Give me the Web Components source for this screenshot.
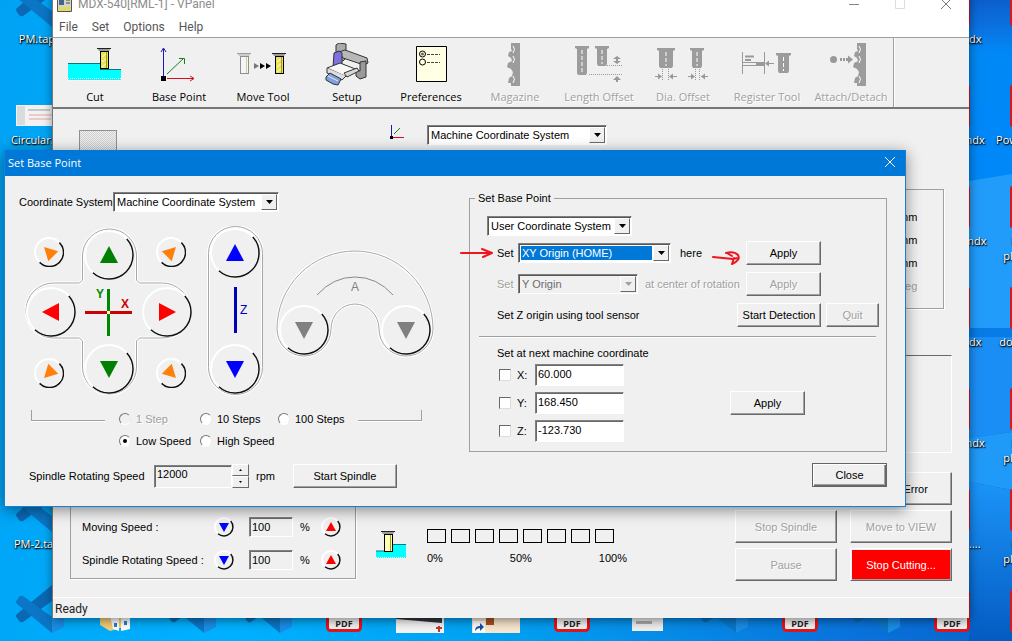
<!DOCTYPE html>
<html lang="en">
<head>
<meta charset="utf-8">
<title>VPanel</title>
<style>
html,body{margin:0;height:100%;overflow:hidden}
body{font:11px/14px "Liberation Sans",Arial,sans-serif;color:#000}
</style>
</head>
<body>
<vp-desktop>
  <app-window></app-window>
  <base-dialog></base-dialog>
</vp-desktop>
<script>
const UI = '"Open Sans","Noto Sans",sans-serif';
const BASE = '*{box-sizing:border-box}button,input,select{font:inherit;color:inherit;margin:0}:host([hidden]){display:none}';
function element(name, render) {
  customElements.define(name, class extends HTMLElement {
    connectedCallback() {
      if (this.shadowRoot) return;
      const root = this.attachShadow({ mode: 'open' });
      const t = document.createElement('template');
      t.innerHTML = render(k => this.getAttribute(k) ?? '', this);
      root.append(t.content.cloneNode(true));
    }
  });
}

/* ---------- drawings ---------- */
const cutter = (x, y, h = 20, body = '#e8e25a') => `<g transform="translate(${x} ${y})"><path d="M0 0h14l-2 3H2z" fill="#9a9a9a"/><path d="M0 .5h14" stroke="#222"/><rect x="3.5" y="3.5" width="8" height="${h - 4}" fill="${body}" stroke="#000"/><path d="M5 9l5-4M5 14l5-4M5 19l5-4" stroke="#fffde0"/><path d="M9.500 4v${h - 5}" stroke="#a39b18"/></g>`;
const greyTool = (x, y, h = 20, w = 14) => `<g transform="translate(${x} ${y})"><path d="M0 0h${w}v2l-2 1v${h - 5}l-1 2H3l-1-2V3L0 2z" fill="#9c9c9c"/><path d="M${w / 2} 4v${h - 6}" stroke="#fff" stroke-dasharray="4 2"/></g>`;
const magazine = x => `<g transform="translate(${x} 0)"><path d="M4 0h9v43H4v-3H1l1-5 3-2 1-4-2-3-4-2 1-4 4-2-1-3-3-2 1-4 3-1-1-2z" fill="#9c9c9c"/><path d="M6 3q3 3 0 7M6 13q3 3 0 7M6 33q3 3 0 7" fill="none" stroke="#fff"/></g>`;
const ICONS = {
  cut: `<path d="M1 20h32v6h21v11H1z" fill="#0ff"/><path d="M1 20.500h32M33 26.500h21" stroke="#087878"/><path d="M1 35.500h53M2 37.500h52" stroke="#fff" stroke-dasharray="1 1"/>${cutter(30, 5, 21)}`,
  base: `<path d="M12.500 33V6M10 9l2.500-4 2.500 4" fill="none" stroke="#2018b0"/><path d="M16 31l17-16M28 15.500h5.500V21" fill="none" stroke="#178017"/><path d="M16 35.500h27M39 33l4 2.500-4 2.500" fill="none" stroke="#d01020"/><path d="M10 33h5v5h-5z"/>`,
  move: `<g opacity=".4">${cutter(2, 10, 21, '#fff')}</g><path d="M19 20v6l5-3z" fill="#777"/><path d="M25 20v6l5-3zM31 20v6l5-3z"/>${cutter(37, 10, 21)}`,
  setup: `<g stroke="#333" stroke-linejoin="round"><path d="M17 2l3-2 7 1v14l-3 3-7-3z" fill="#aaa"/><path d="M20 9l6-2 22 8 1 5-4 2-21-7z" fill="#b8b8b8"/><path d="M41 19l6-1v16l-6 2-4-3v-6l4 1z" fill="#999"/><path d="M15 10l5-2 3 2v14l-5 4-4-3z" fill="#7c74dc"/><path d="M8 25l13-5 18 7-13 6z" fill="#f8f8f8"/><path d="M25 30l13-5 2 3-12 6z" fill="#d7d7d7"/><path d="M8 25v5l15 7 4-4" fill="#ddd"/><path d="M7 34l4-4 11 6-3 6-5-1-7-4z" fill="#7fa0dc"/><path d="M9 33l10 5" fill="none" stroke="#dfe9ff"/></g>`,
  prefs: `<path d="M13.500 3.500h30v35h-30z" fill="#ffffe4" stroke="#000"/><circle cx="19.500" cy="11" r="3" fill="none" stroke="#000"/><circle cx="19.500" cy="11" r="1.500" fill="#666"/><circle cx="19.500" cy="19" r="3" fill="none" stroke="#000"/><path d="M24 11.500h13M24 19.500h13" stroke="#444" stroke-dasharray="3 1"/>`,
  magazine: magazine(20),
  length: `${greyTool(4, 3, 29)}${greyTool(24, 3, 20)}<path d="M36 22.500h16M18 31.500h34" stroke="#999" stroke-dasharray="1 1"/><path d="M46 21l-4-3h3v-2h-3l4-3 4 3h-3v2h3zM45 39v-2h-3l4-4 4 4h-3v2z" fill="#999"/>`,
  dia: `${greyTool(2, 5, 20, 18)}${greyTool(35, 5, 20)}<path d="M7.500 26v12M13.500 26v12M40.500 26v12M44.500 26v12" stroke="#999" stroke-dasharray="1 1"/><path d="M0 33.500h6M15 33.500h7M33 33.500h6M46 33.500h7" stroke="#999"/><path d="M7 33.500l-4-3v6zM14 33.500l4-3v6zM40 33.500l-4-3v6zM46 33.500l4-3v6z" fill="#999"/>`,
  register: `<path d="M3.500 9v22M25.500 9v22M4 19.500h18M4 22.500h22M28 20.500h7" stroke="#999"/><path d="M6 13.500h9M6 17h6" stroke="#999" stroke-width="2"/><path d="M17 19h8v4h-8zM26 20.500l4-3v6z" fill="#999"/>${greyTool(37, 10, 20, 15)}`,
  attach: `<circle cx="10.500" cy="16.500" r="3.500" fill="#999"/><path d="M17 16.500h9" stroke="#999" stroke-width="3" stroke-dasharray="2 1"/><path d="M30 16.500l-5-4v8z" fill="#999"/>${magazine(30)}`
};
const axes = `<svg width="14" height="14" viewBox="0 0 14 14" aria-hidden="true"><path d="M1.500 0v11" stroke="#2018b0"/><path d="M4 9l6-6" stroke="#178017"/><path d="M3 12.500h11" stroke="#d01020"/><path d="M0 11h3v3H0z"/></svg>`;
const codeIcon = `<path d="M1 33q-2-2 0-4L36 0v16L7 37q-2 1-4-1z" fill="#0a68b4"/><path d="M1 15q-2 2 0 4l35 29V32L7 11q-2-1-4 1z" fill="#0b76c6"/><path d="M36 0l12 6v36l-12 6z" fill="#1a8de6"/>`;
const DESK = {
  code: codeIcon,
  pdf: `<rect x="7.500" y="5.500" width="33" height="40" rx="3" fill="#f2f2f2" stroke="#e0151d" stroke-width="3"/><text x="24" y="42" text-anchor="middle" font-family="Open Sans" font-size="9" font-weight="700" fill="#222">PDF</text>`,
  red: `<rect x="6" y="5" width="36" height="42" rx="2" fill="#d81920"/>`,
  thumb: `<path d="M0 25h48v21H0z" fill="#f2f2f2"/><path d="M1 26h8v19H1z" fill="#d9dcde"/><path d="M12 30h22" stroke="#999"/><path d="M13 35h26M13 39h22" stroke="#e6a2a2"/>`,
  folder: `<path d="M8 20h16l14 10v10l-20 6-10-6z" fill="#f3ce76"/><path d="M18 30h9v16l-6-2zM29 30h9v14l-9 2z" fill="#fff"/><path d="M22 38h3v4h-3zM32 36h3v4h-3z" fill="#2186cf"/>`,
  photo: `<path d="M0 20h48v29H0z" fill="#f4f4f4"/><path d="M0 20h46v18L0 34z" fill="#30343a"/><path d="M40 43h6M43 41v6" stroke="#c33" stroke-width="2"/>`,
  short: `<path d="M0 20h48v29H0z" fill="#f8e6cf"/><path d="M14 20h8v20h-8z" fill="#a65320"/><path d="M1 36h12v12H1z" fill="#fff"/><path d="M3 46q0-5 5-5v-3l4 4-4 4v-3q-3 0-5 3" fill="#174ea6"/>`,
  doc: `<path d="M8 10h31v36H8z" fill="#efefef"/><path d="M12 37.500h16" stroke="#aaa" stroke-width="3"/>`
};

/* ---------- desktop ---------- */
element('desk-icon', a => `<style>${BASE}
:host{display:flex;flex-direction:column;align-items:center;min-width:0}
svg{flex:none;width:48px;height:48px}
span{margin-top:4px;font:11px/15px ${UI};color:#fff;text-align:center;white-space:pre;text-shadow:0 1px 2px #000,1px 1px 1px #000}</style>
<svg viewBox="0 0 48 48" aria-hidden="true">${DESK[a('kind')]}</svg><span><slot></slot></span>`);

const ICON_GRID = [
  [1,1,'code','PM.tape'],[1,2,'thumb','Circular.p...'],[1,6,'code','PM-2.tape'],[1,7,'code','PM-3.tap'],
  [2,7,'folder','Arquivo'],[3,7,'code','Flash'],[4,7,'code','notas.nc'],[5,7,'pdf','2021_Outub'],[6,7,'photo','CMM'],
  [7,7,'short','Mold_Ch'],[8,7,'pdf','View_Quad'],[9,7,'doc','Flex_Ed'],[10,7,'code','202'],[11,7,'pdf','Joao_M_10'],[12,7,'code','202'],[13,7,'pdf','Videos_On'],
  [13,1,'red','fixture.mdx'],[13,2,'red','fixture2.mdx'],[13,3,'red','fixture-3.mdx'],[13,4,'red','fixture.mdx'],[13,5,'red','fixture4.mdx'],[13,6,'red','fixture 5 ....'],
  [14,1,'red',''],[14,2,'red','Power BI R...'],[14,3,'red','BR120\nplaca-001'],[14,4,'red','dominios-1'],[14,5,'red','BR120\nplaca-002'],[14,6,'red','BR120\nplaca-003'],[14,7,'red','']
];
element('vp-desktop', () => `<style>${BASE}
:host{display:block;position:relative;height:100vh;overflow:hidden;background:linear-gradient(100deg,#00a2f4 0,#00b1ff 30%,#02a0f1 55%,#0a74dc 85%,#0664cd 100%)}
.ray{position:absolute;top:0;right:0;width:43px;height:100%}
.icons{display:grid;grid-template-columns:repeat(14,76px);grid-template-rows:repeat(7,101px);margin:-21px 0 0 2px;position:absolute}</style>
<svg class="ray" viewBox="0 0 43 641" preserveAspectRatio="none" aria-hidden="true">
<defs><linearGradient id="r" x2="0" y2="1"><stop offset="0" stop-color="#0b5fcc"/><stop offset=".15" stop-color="#0b73e2"/><stop offset=".28" stop-color="#0089f6"/></linearGradient>
<linearGradient id="s" x2="0" y2="1"><stop offset="0" stop-color="#1b94f8"/><stop offset="1" stop-color="#045bc2"/></linearGradient></defs>
<path d="M0 0h43v190H0z" fill="url(#r)"/><path d="M0 99l43 14v60L0 181z" fill="#0088f8"/><path d="M0 181l43-7v154H0z" fill="#229cfb"/><path d="M0 328h43v9H0z" fill="#087be6"/><path d="M0 337h43v95l-43 6z" fill="#1b8ef5"/><path d="M0 438l43-6v58l-43-8z" fill="#209af9"/><path d="M0 482l43 8v151H0z" fill="url(#s)"/></svg>
<div class="icons">${ICON_GRID.map(([c, r, k, t]) => `<desk-icon kind="${k}" style="grid-area:${r}/${c}">${t}</desk-icon>`).join('')}</div>
<slot></slot>`);

/* ---------- controls ---------- */
element('win-button', (a, el) => `<style>${BASE}
:host{display:inline-flex;width:75px;height:24px}
button{flex:1;min-width:0;padding:0;background:#f0f0f0;border:1px solid;border-color:#fff #696969 #696969 #fff;box-shadow:inset -1px -1px #a0a0a0;white-space:nowrap}
button:disabled{color:#a0a0a0;text-shadow:1px 1px #fff}
:host([tone=stop]) button{background:#f00;color:#fff;box-shadow:inset 1px 1px #f0f0f0,inset -1px -1px #a0a0a0}
:host([default]) button{border-color:#646464;box-shadow:inset 1px 1px #fff,inset -1px -1px #696969,inset -2px -2px #a0a0a0}</style>
<button type="button" ${el.hasAttribute('disabled') ? 'disabled' : ''}><slot></slot></button>`);

element('win-select', (a, el) => `<style>${BASE}
:host{display:inline-flex;align-items:center;--w:150px}
label{flex:none;width:var(--label,auto);white-space:nowrap}
.box{position:relative;width:var(--w);height:20px;border:1px solid;border-color:#808080 #fff #fff #808080;box-shadow:inset 1px 1px #555;background:#fff;padding:2px}
select{appearance:none;display:block;width:calc(100% - 16px);height:100%;border:0;border-radius:0;outline:0;padding:0 0 0 1px;background:none;line-height:14px;opacity:1}
.arrow{position:absolute;top:1px;right:1px;bottom:1px;width:16px;background:#f0f0f0;border:1px solid;border-color:#fff #696969 #696969 #fff;display:grid;place-items:center;pointer-events:none}
:host([active]) select{background:#0078d7;color:#fff}
:host([disabled]) label{color:#a0a0a0;text-shadow:1px 1px #fff}
:host([disabled]) .box{background:#f0f0f0}
:host([disabled]) select{color:#6d6d6d}
:host([disabled]) .arrow{color:#a0a0a0}</style>
${a('label') ? `<label for="s">${a('label')}</label>` : ''}
<div class="box"><select id="s" ${a('label') ? '' : `aria-label="${a('name')}"`} ${el.hasAttribute('disabled') ? 'disabled' : ''}><option>${a('value')}</option></select>
<span class="arrow"><svg width="7" height="4" viewBox="0 0 7 4"><path d="M0 0h7L3.500 4z" fill="currentColor"/></svg></span></div>`);

const fieldCss = 'border:1px solid;border-color:#808080 #fff #fff #808080;box-shadow:inset 1px 1px #696969;outline:0;border-radius:0;';

element('round-button', a => {
  const large = a('size') === 'large', small = a('size') === 'small';
  const s = large ? 50 : small ? 30 : 20, c = s / 2, r = c - 1;
  const p = (deg, rr = r) => `${(c + rr * Math.cos(deg * Math.PI / 180)).toFixed(1)} ${(c + rr * Math.sin(deg * Math.PI / 180)).toFixed(1)}`;
  const t = large ? 9 : small ? 7 : 5;
  const turn = { up: 0, right: 90, down: 180, left: 270, nw: -45, ne: 45, sw: -135, se: 135 }[a('dir')];
  return `<style>${BASE}:host{display:block;width:${s}px;height:${s}px;color:#ff7f0a}
button{display:block;width:100%;height:100%;padding:0;border:0;border-radius:50%;background:#f0f0f0}svg{display:block}</style>
<button type="button" aria-label="${a('label')}"><svg width="${s}" height="${s}" viewBox="0 0 ${s} ${s}" fill="none">
<circle cx="${c}" cy="${c}" r="${r}" stroke="#fff" stroke-width="2"/>
<path d="M${p(-42)}A${r} ${r} 0 0 1 ${p(132)}" stroke="#111" stroke-width="1.500"/>
<path d="M${c - t} ${c + t - 1}L${c} ${c - t}L${c + t} ${c + t - 1}z" fill="currentColor" transform="rotate(${turn} ${c} ${c})"/></svg></button>`;
});

/* ---------- main application window ---------- */
element('tool-button', (a, el) => `<style>${BASE}
:host{display:block;flex:0 1 84px;min-width:0}
button{width:100%;height:69px;padding:5px 0 0;border:0;background:none;display:flex;flex-direction:column;align-items:center;font:11px/16px ${UI};white-space:nowrap}
svg{flex:none;margin-bottom:2px}
button:disabled{color:#a0a0a0;text-shadow:1px 1px #fff}</style>
<button type="button" ${el.hasAttribute('disabled') ? 'disabled' : ''}><svg width="56" height="44" viewBox="0 0 56 44" aria-hidden="true">${ICONS[a('icon')]}</svg><slot></slot></button>`);

element('override-row', a => `<style>${BASE}
:host{display:grid;grid-template-columns:132px 35px 51px 21px 20px;align-items:center;height:20px}
input{width:44px;height:20px;padding:0 2px;background:#f0f0f0;${fieldCss}}</style>
<label for="v">${a('label')}</label>
<round-button dir="down" label="Decrease" style="color:#00f"></round-button>
<input id="v" value="100"><span>%</span>
<round-button dir="up" label="Increase" style="color:#f00"></round-button>`);

element('load-meter', () => `<style>${BASE}
:host{display:flex;gap:21px;align-items:flex-start}
.bars{display:flex;gap:5px;height:14px;margin-bottom:8px}.bars i{width:19px;border:1px solid #000}
.scale{display:flex;justify-content:space-between;width:200px}</style>
<svg width="30" height="31" viewBox="0 0 30 31" aria-hidden="true"><path d="M0 22h17v-7h13v14H0z" fill="#0ff"/><path d="M0 22h10M17 15.500h13" stroke="#087878"/><path d="M0 28.500h30" stroke="#fff" stroke-dasharray="1 1"/>${cutter(5, 2, 21, '#ffffb0')}</svg>
<div><div class="bars">${'<i></i>'.repeat(8)}</div><div class="scale"><span>0%</span><span>50%</span><span>100%</span></div></div>`);

element('app-window', () => `<style>${BASE}
:host{position:absolute;top:-11px;left:53px;right:43px;bottom:23px;display:flex;flex-direction:column;background:#f0f0f0;box-shadow:-1px 0 #777,0 2px 10px rgba(0,0,0,.5)}
header{display:flex;align-items:center;height:30px;flex:none;background:#fff;color:#8c8c8c;font:12px/16px Roboto,sans-serif;padding-left:4px;gap:6px}
h1{font:inherit;margin:0;flex:1}
header .ctl{display:flex}header button{width:46px;height:30px;border:0;background:none;padding:0;display:grid;place-items:center}
nav{display:flex;gap:14px;height:19px;flex:none;padding-left:6px;background:#fff;border-bottom:1px solid #a0a0a0;font:12px/16px Roboto,sans-serif}
nav a{color:#555;text-decoration:none}
.tools{display:flex;flex:none;height:71px;border-bottom:2px solid #777}
.tools i{border-left:1px solid #a0a0a0;border-right:1px solid #fff}
main{flex:1;min-height:0;display:flex;flex-direction:column;padding:16px 17px 16px 17px}
.top{display:flex;align-items:flex-start}
.hatch{width:38px;height:30px;margin:5px 273px -16px 9px;border:1px solid #909090;background:repeating-conic-gradient(#d0d0d0 0 25%,#efefef 0 50%) 0 0/2px 2px}
.top svg{margin-right:23px}
.units{align-self:flex-end;width:48%;height:120px;margin:44px 8px 0 0;border:1px solid #a0a0a0;padding:15px 0 0;display:grid;grid-template-columns:44px;grid-auto-rows:23px;align-items:center;justify-content:end;box-shadow:1px 1px #fff}
.units .off{color:#a0a0a0}
.view{align-self:flex-end;width:48%;height:98px;margin:46px 0 0;border:1px solid;border-color:#696969 #fff #fff #696969;flex:none}
.units,.top{flex:none}
.bottom{display:flex;align-items:flex-end;margin-top:auto}
.over{width:286px;height:100px;margin-bottom:2px;border:1px solid #a0a0a0;box-shadow:1px 1px #fff;padding:0 11px 8px;display:flex;flex-direction:column;justify-content:flex-end;gap:13px}
load-meter{margin:0 auto 16px 20px}
.act{display:grid;grid-template-columns:102px 102px;grid-auto-rows:33px;gap:5px 13px}
.act win-button{width:auto;height:auto}.act .e{grid-column:2}
footer{flex:none;height:21px;border-top:1px solid #fff;font:12px/22px Roboto,sans-serif;padding-left:2px;color:#222}</style>
<header><svg width="15" height="15" viewBox="0 0 15 15" aria-hidden="true"><path d="M.5.5h14v14H.5z" fill="#d4d4c8" stroke="#555"/><path d="M2 10h3v4H2zM6 10h3v4H6zM10 10h3v4h-3z" fill="#e3dc43"/><path d="M2 3h5v5H2z" fill="#468"/><path d="M9 3h4M9 6h4" stroke="#444"/></svg><h1>MDX-540[RML-1] - VPanel</h1>
<div class="ctl"><button aria-label="Minimize"><svg width="10" height="10"><path d="M0 5.500h10" stroke="#888"/></svg></button><button aria-label="Maximize" disabled><svg width="10" height="10"><path d="M.5.5h9v9h-9z" fill="none" stroke="#ddd"/></svg></button><button aria-label="Close"><svg width="10" height="10"><path d="M0 0l10 10M10 0L0 10" stroke="#777"/></svg></button></div></header>
<nav><a href="#file">File</a><a href="#set">Set</a><a href="#options">Options</a><a href="#help">Help</a></nav>
<div class="tools">
<tool-button icon="cut">Cut</tool-button><tool-button icon="base">Base Point</tool-button><tool-button icon="move">Move Tool</tool-button><tool-button icon="setup">Setup</tool-button><tool-button icon="prefs">Preferences</tool-button><tool-button icon="magazine" disabled>Magazine</tool-button><tool-button icon="length" disabled>Length Offset</tool-button><tool-button icon="dia" disabled>Dia. Offset</tool-button><tool-button icon="register" disabled>Register Tool</tool-button><tool-button icon="attach" disabled>Attach/Detach</tool-button><i></i></div>
<main><div class="top"><div class="hatch"></div>${axes}<win-select name="Coordinate system" value="Machine Coordinate System" style="--w:180px"></win-select></div>
<div class="units"><span>mm</span><span>mm</span><span>mm</span><span class="off">deg</span></div>
<div class="view"></div>
<div class="bottom"><div class="over"><override-row label="Moving Speed :"></override-row><override-row label="Spindle Rotating Speed :"></override-row></div>
<load-meter></load-meter>
<div class="act"><win-button class="e">Clear Error</win-button><win-button disabled>Stop Spindle</win-button><win-button disabled>Move to VIEW</win-button><win-button disabled>Pause</win-button><win-button tone="stop">Stop Cutting...</win-button></div></div></main>
<footer>Ready</footer>`);

/* ---------- jog pads ---------- */
const outline = d => `<path d="${d}" fill="none" stroke="#fff" stroke-width="3"/><path d="${d}" fill="none" stroke="#a8a8a0"/>`;
element('jog-pads', () => `<style>${BASE}
:host{display:flex;height:170px}
.pad{position:relative;flex:none}.pad>svg{position:absolute;inset:0}
.pad round-button{position:relative}
.xy{width:168px;display:grid;grid-template-columns:50px 66px 50px;grid-template-rows:50px 64px 50px;padding:4px 0 0 2px}
.xy [dir=up],.xy [dir=down]{grid-column:2;justify-self:center}.xy [dir=left]{grid-column:1;align-self:center}.xy [dir=right]{grid-column:3;align-self:center}
.l{justify-self:start;margin-left:8px}.r{justify-self:end;margin-right:6px}.t{margin-top:7px}.b{align-self:end;margin-bottom:6px}
.z{width:56px;margin-left:15px;display:flex;flex-direction:column;justify-content:space-between;align-items:center;padding:2px 0 2px}
.a{width:158px;height:108px;margin:24px 0 0 13px;display:flex;justify-content:space-between;align-items:flex-end;padding:0 3px 3px}
text{font-family:"Liberation Sans",sans-serif;font-size:12px}</style>
<div class="pad xy"><svg width="168" height="170" viewBox="0 0 168 170" aria-hidden="true">${outline('M58.500 54V30a27 27 0 0 1 54 0v24l3 3h23a27 27 0 0 1 0 55h-23l-3 3v26a27 27 0 0 1-54 0v-26l-3-3h-26a27 27 0 0 1 0-55h26z')}
<path d="M61 86.500h47" stroke="#c00" stroke-width="3"/><path d="M84.500 63v47" stroke="#080" stroke-width="3"/><path d="M83 85h3v3h-3z" fill="#ffd"/>
<text x="72" y="72" fill="#080" font-weight="bold">Y</text><text x="97" y="82" fill="#c00" font-weight="bold">X</text></svg>
<round-button class="l t" size="small" dir="nw" label="Left back"></round-button><round-button size="large" dir="up" label="Y plus" style="color:#008000"></round-button><round-button class="r t" size="small" dir="ne" label="Right back"></round-button>
<round-button size="large" dir="left" label="X minus" style="color:#f00"></round-button><round-button size="large" dir="right" label="X plus" style="color:#f00"></round-button>
<round-button class="l b" size="small" dir="sw" label="Left front"></round-button><round-button size="large" dir="down" label="Y minus" style="color:#008000"></round-button><round-button class="r b" size="small" dir="se" label="Right front"></round-button></div>
<div class="pad z"><svg width="56" height="170" viewBox="0 0 56 170" aria-hidden="true">${outline('M1.500 27.500a27 27 0 0 1 54 0v114a27 27 0 0 1-54 0z')}<path d="M28.500 61v46" stroke="#00b" stroke-width="3"/><text x="33" y="88" fill="#00b">Z</text></svg>
<round-button size="large" dir="up" label="Z plus" style="color:#00f"></round-button><round-button size="large" dir="down" label="Z minus" style="color:#00f"></round-button></div>
<div class="pad a"><svg width="158" height="108" viewBox="0 0 158 108" aria-hidden="true">${outline('M1 79a78 78 0 0 1 156 0a27 27 0 0 1-54 0a24 25 0 0 0-48 0a27 27 0 0 1-54 0z')}<path d="M41 45q16-18 38-18t38 18" fill="none" stroke="#888"/><text x="79" y="41" text-anchor="middle" fill="#808080">A</text></svg>
<round-button size="large" dir="down" label="A minus" style="color:#808080"></round-button><round-button size="large" dir="down" label="A plus" style="color:#808080"></round-button></div>`);

element('step-picker', () => `<style>${BASE}
:host{display:grid;grid-template-columns:88px 81px 78px 80px 64px;grid-template-rows:22px 22px;align-items:center}
.k{height:11px;border-bottom:1px solid #a0a0a0;box-shadow:0 1px #fff;align-self:start;margin-top:2px}
.k.l{border-left:1px solid #a0a0a0;margin-right:14px}.k.r{border-right:1px solid #a0a0a0}
label{display:flex;align-items:center;gap:5px;white-space:nowrap}.c2{grid-column:2}
.off{color:#a0a0a0;text-shadow:1px 1px #fff}
input{appearance:none;width:12px;height:12px;border-radius:50%;border:1px solid;border-color:#777 #eee #fff #777;background:#fff;display:grid;place-items:center}
input:disabled{background:#f0f0f0}
input:checked::before{content:"";width:4px;height:4px;border-radius:50%;background:#000}</style>
<span class="k l"></span><label class="off"><input type="radio" name="s" disabled>1 Step</label><label><input type="radio" name="s">10 Steps</label><label><input type="radio" name="s">100 Steps</label><span class="k r"></span>
<label class="c2"><input type="radio" name="s" checked>Low Speed</label><label><input type="radio" name="s">High Speed</label>`);

element('spindle-row', () => `<style>${BASE}
:host{display:flex;align-items:center;height:24px}
label{width:125px}input{width:78px;height:23px;padding:0 2px 4px;background:#f0f0f0;${fieldCss}}
.spin{display:grid;grid-template-rows:12px 12px;width:17px;margin:0 7px 0 0}
.spin button{padding:0;border:1px solid;border-color:#fff #696969 #696969 #fff;background:#f0f0f0;display:grid;place-items:center}
win-button{width:104px;margin-left:18px}</style>
<label for="v">Spindle Rotating Speed</label><input id="v" value="12000">
<span class="spin"><button aria-label="Up"><svg width="3" height="2"><path d="M0 2h3L1.500 0z"/></svg></button><button aria-label="Down"><svg width="3" height="2"><path d="M0 0h3L1.500 2z"/></svg></button></span>
<span>rpm</span><win-button>Start Spindle</win-button>`);

element('axis-field', a => `<style>${BASE}
:host{display:flex;align-items:center;height:22px}
label{display:flex;align-items:center;gap:6px;width:36px}
.c{appearance:none;width:12px;height:12px;background:#fff;border:1px solid;border-color:#696969 #ddd #ddd #696969}
.t{width:89px;height:22px;padding:0 2px 3px;background:#fff;${fieldCss}}</style>
<label><input class="c" type="checkbox">${a('axis')}:</label><input class="t" aria-label="${a('axis')} coordinate" value="${a('value')}">`);

/* ---------- dialog ---------- */
element('base-dialog', () => `<style>${BASE}
:host{position:absolute;top:150px;left:4px;right:106px;background:#f0f0f0;border:1px solid #1a7fd0;box-shadow:0 3px 14px rgba(0,0,0,.45)}
header{display:flex;align-items:center;justify-content:space-between;height:26px;margin-top:-1px;padding-left:3px;background:#0078d7;color:#fff;font:11px/16px ${UI}}
h2{font:inherit;margin:0}
header button{width:31px;height:26px;border:0;background:none;padding:0}
.body{display:grid;grid-template-columns:minmax(0,1fr) 418px;padding:16px 18px 18px 0}
.left{display:flex;flex-direction:column}
.left win-select{margin-left:14px}
jog-pads{margin:14px 0 0 19px}step-picker{margin:12px 0 0 26px}spindle-row{margin:12px 0 0 24px}
fieldset{margin:0;min-width:0;border:1px solid #a0a0a0;padding:12px 7px 9px 27px}
legend{line-height:12px;padding:0 3px;margin-left:-22px}
.row{display:flex;align-items:center;height:24px;margin-bottom:7px}
.row.first{height:20px;margin:0 0 5px -10px}
.row win-button{flex:none}.row .go{margin:0 58px 0 auto}
.off{color:#a0a0a0;text-shadow:1px 1px #fff}
hr{margin:9px 3px 8px -18px;border:0;border-top:1px solid #a0a0a0;border-bottom:1px solid #fff}
.coords{display:flex;align-items:center;justify-content:space-between;margin:4px 74px 0 2px}
.axes{display:grid;gap:6px}
.done{display:flex;justify-content:flex-end;margin-top:11px}
.ink{position:absolute;left:455px;top:92px;pointer-events:none}</style>
<header><h2>Set Base Point</h2><button aria-label="Close"><svg width="10" height="10"><path d="M0 0l10 10M10 0L0 10" stroke="#fff"/></svg></button></header>
<div class="body"><div class="left">
<win-select label="Coordinate System" value="Machine Coordinate System" style="--w:166px;--label:94px"></win-select>
<jog-pads></jog-pads><step-picker></step-picker><spindle-row></spindle-row></div>
<div><fieldset><legend>Set Base Point</legend>
<div class="row first"><win-select name="Target coordinate system" value="User Coordinate System" style="--w:145px"></win-select></div>
<div class="row"><win-select active label="Set" value="XY Origin (HOME)" style="--w:153px;--label:21px;margin-right:9px"></win-select><span>here</span><win-button class="go">Apply</win-button></div>
<div class="row"><win-select disabled label="Set" value="Y Origin" style="--w:120px;--label:21px;margin-right:7px"></win-select><span class="off">at center of rotation</span><win-button class="go" disabled>Apply</win-button></div>
<div class="row"><span>Set Z origin using tool sensor</span><win-button style="width:84px;margin:0 5px 0 auto">Start Detection</win-button><win-button disabled style="width:53px">Quit</win-button></div>
<hr><div>Set at next machine coordinate</div>
<div class="coords"><div class="axes"><axis-field axis="X" value="60.000"></axis-field><axis-field axis="Y" value="168.450"></axis-field><axis-field axis="Z" value="-123.730"></axis-field></div><win-button>Apply</win-button></div>
</fieldset><div class="done"><win-button default>Close</win-button></div></div></div>
<svg class="ink" width="286" height="26" viewBox="0 0 286 26" fill="none" stroke="#f0141e" stroke-width="2" stroke-linecap="round" stroke-linejoin="round" aria-hidden="true"><path d="M1 10h31M22 6l10 4-9 4M253 14l20 2 5-1M266 10q8-2 12 2 3 5-6 9l2-6M267 10l5 3"/></svg>`);
</script>
</body>
</html>
